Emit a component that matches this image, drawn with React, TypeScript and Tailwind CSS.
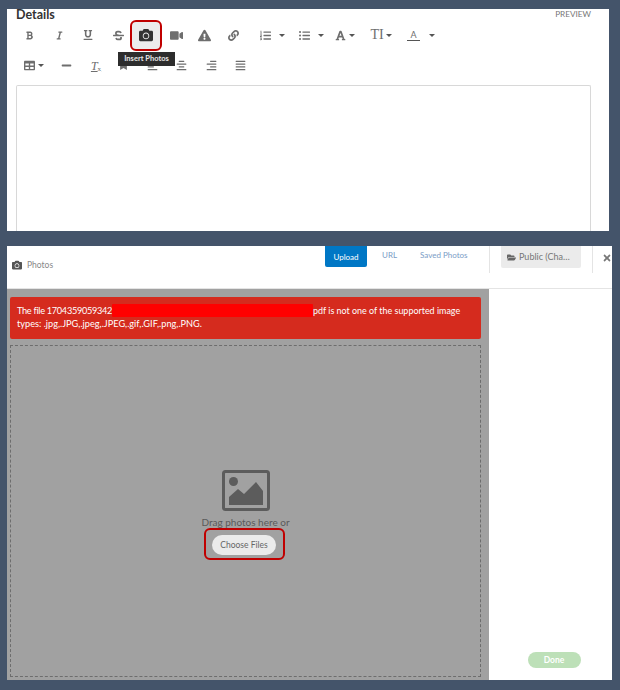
import { ReactNode } from 'react'
import {
  FaBold, FaItalic, FaUnderline, FaStrikethrough, FaCamera, FaVideo, FaExclamationTriangle, FaLink,
  FaListOl, FaListUl, FaFont, FaTable, FaMinus, FaBookmark, FaAlignLeft, FaAlignCenter, FaAlignRight,
  FaAlignJustify, FaFolderOpen, FaTimes,
} from 'react-icons/fa'

const Caret = () => <span className="h-0 w-0 border-x-[3px] border-t-[3px] border-x-transparent border-t-[#555]" />

function Tool({ w, children }: { w: string; children: ReactNode }) {
  return <div className={`${w} flex h-[30px] shrink-0 items-center justify-center text-[#6e6e6e]`}>{children}</div>
}

function EditorPanel() {
  return (
    <section className="flex h-[222px] w-[602px] flex-col bg-white pl-[9px] pr-[18px]">
      <div className="flex h-[11px] items-end justify-between">
        <h2 className="text-[12.5px] font-bold leading-[11px] text-[#333]">Details</h2>
        <span className="text-[8.2px] leading-[11px] text-[#777]">PREVIEW</span>
      </div>
      <div className="flex h-[30px] items-center">
        <Tool w="w-[26px]"><FaBold size={9} /></Tool>
        <Tool w="w-[34px]"><FaItalic size={9} /></Tool>
        <Tool w="w-[24px]"><FaUnderline size={10} /></Tool>
        <Tool w="ml-[6px] w-[24px]"><FaStrikethrough size={11} /></Tool>
        <div className="relative flex h-[31px] w-[32px] shrink-0 items-center justify-center rounded-[6px] border-2 border-[#c00000] bg-[#ececec] text-[#333]">
          <FaCamera size={14} />
          <div className="absolute left-[-14px] top-[30px] z-10 flex h-[14px] w-[57px] items-center justify-center whitespace-nowrap bg-[#2d2d2d] text-[7.5px] font-bold text-[#e8e8e8]">
            Insert Photos
          </div>
        </div>
        <Tool w="w-[28px]"><FaVideo size={13} /></Tool>
        <Tool w="w-[28px]"><FaExclamationTriangle size={13} /></Tool>
        <Tool w="w-[30px]"><FaLink size={11} /></Tool>
        <Tool w="w-[48px] gap-[8px]"><FaListOl size={11} /><Caret /></Tool>
        <Tool w="w-[30px] gap-[8px]"><FaListUl size={11} /><Caret /></Tool>
        <Tool w="w-[37px] gap-[3px]"><FaFont size={11} /><Caret /></Tool>
        <Tool w="w-[36px] gap-[2px]"><span className="font-['Liberation_Serif',serif] text-[14px] leading-none">TI</span><Caret /></Tool>
        <Tool w="w-[44px] gap-[9px]">
          <span className="border-b border-[#555] px-[3px] text-[9px] leading-[11px]">A</span><Caret />
        </Tool>
      </div>
      <div className="flex h-[31px] items-center">
        <Tool w="w-[36px] gap-[3px]"><FaTable size={11} /><Caret /></Tool>
        <Tool w="w-[28px]"><FaMinus size={11} /></Tool>
        <Tool w="w-[32px]"><span className="font-['Liberation_Serif',serif] text-[12px] italic leading-none underline">T<sub className="text-[7px] not-italic no-underline">x</sub></span></Tool>
        <Tool w="w-[22px]"><FaBookmark size={9} /></Tool>
        <Tool w="w-[36px]"><FaAlignLeft size={11} /></Tool>
        <Tool w="w-[22px]"><FaAlignCenter size={11} /></Tool>
        <Tool w="w-[38px]"><FaAlignRight size={11} /></Tool>
        <Tool w="w-[20px]"><FaAlignJustify size={11} /></Tool>
      </div>
      <div className="mt-[4px] h-[146px] shrink-0 rounded-t-[2px] border border-b-0 border-[#d8d8d8]" />
    </section>
  )
}

function PhotosPanel() {
  return (
    <section className="mt-[15px] flex h-[434px] w-[605px] flex-col bg-white">
      <header className="flex h-[43px] shrink-0 whitespace-nowrap border-b border-[#e4e4e4]">
        <div className="flex w-[318px] shrink-0 items-center gap-[5px] pb-[4px] pl-[5px] text-[8.5px] text-[#888]">
          <FaCamera size={10} className="text-[#555]" />
          <span>Photos</span>
        </div>
        <div className="flex h-[21px] w-[42px] shrink-0 items-center justify-center rounded-b-[2px] bg-[#0077c5] text-[8px] text-white">Upload</div>
        <div className="ml-[15px] h-[21px] w-[14px] shrink-0 text-[8px] leading-[19px] text-[#7a9cc6]">URL</div>
        <div className="ml-[24px] h-[21px] w-[46px] shrink-0 text-[8px] leading-[19px] text-[#7a9cc6]">Saved Photos</div>
        <div className="ml-[23px] flex h-[27px] shrink-0 border-l border-[#e4e4e4] pl-[11px]">
          <div className="flex h-[22px] w-[80px] items-center gap-[3px] rounded-b-[2px] bg-[#ebebeb] pl-[6px] text-[9px] text-[#777]">
            <FaFolderOpen size={9} className="text-[#666]" />
            <span>Public (Cha…</span>
          </div>
          <div className="ml-[11px] h-[27px] border-l border-[#e4e4e4] pl-[9px] pt-[7px] text-[#777]">
            <FaTimes size={10} />
          </div>
        </div>
      </header>
      <div className="flex min-h-0 flex-1">
        <div className="flex w-[482px] shrink-0 flex-col bg-[#a1a1a1] pb-[3px] pl-[3px] pr-[8px] pt-[8px]">
          <div className="h-[42px] shrink-0 rounded-[2px] bg-[#d52b1e] px-[7px] pt-[7px] text-[9.2px] leading-[13px] text-white">
            <p className="flex whitespace-nowrap">
              <span className="w-[95px] shrink-0 tracking-[-0.3px]">The file 1704359059342</span>
              <span className="h-[13px] w-[201px] shrink-0 rounded-[1px] bg-[#ff0000]" />
              <span className="text-[8.95px]">pdf is not one of the supported image</span>
            </p>
            <p>types: .jpg,.JPG,.jpeg,.JPEG,.gif,.GIF,.png,.PNG.</p>
          </div>
          <div className="mt-[6px] flex min-h-0 flex-1 flex-col items-center border border-dashed border-[#6d6d6d] pt-[124px]">
            <svg width="48" height="41" viewBox="0 0 48 41" fill="none">
              <rect x="1.5" y="1.5" width="45" height="38" rx="2" stroke="#5c5c5c" strokeWidth="3" />
              <circle cx="11.5" cy="11.5" r="4.5" fill="#5c5c5c" />
              <path d="M7 35v-8l9-8 6 5 12-12 7 9v14z" fill="#5c5c5c" />
            </svg>
            <p className="mt-[6px] text-[10px] leading-[11px] text-[#5a5a5a]">Drag photos here or</p>
            <div className="mr-[3px] flex h-[32px] w-[81px] items-center justify-center rounded-[6px] border-2 border-[#c00000] pt-[1px]">
              <div className="flex h-[20px] w-[64px] items-center justify-center rounded-full bg-[#ebebeb] pt-[1px] text-[8.5px] text-[#666]">Choose Files</div>
            </div>
          </div>
        </div>
        <div className="flex flex-1 flex-col items-center justify-end pb-[12px] pl-[7px]">
          <div className="flex h-[16px] w-[53px] items-center justify-center rounded-full bg-[#bde0b8] text-[8.5px] font-bold text-white">Done</div>
        </div>
      </div>
    </section>
  )
}

export default function App() {
  return (
    <div className="h-[690px] w-[620px] overflow-hidden bg-[#44546a] pl-[7px] pt-[9px] font-['Lato',sans-serif]">
      <EditorPanel />
      <PhotosPanel />
    </div>
  )
}
